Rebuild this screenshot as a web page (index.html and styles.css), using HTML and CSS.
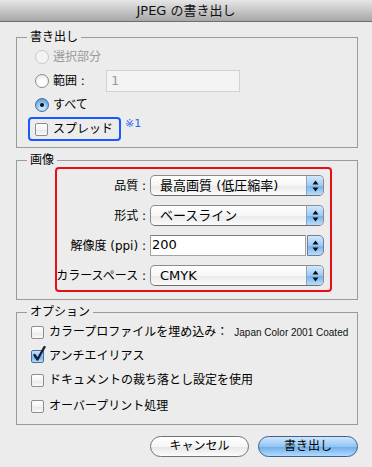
FILE: index.html
```html
<!DOCTYPE html>
<html lang="ja">
<head>
<meta charset="utf-8">
<link rel="stylesheet" href="styles.css">
</head>
<body>
<div class="window">
  <div class="titlebar">JPEG の書き出し</div>
  <div class="content">
    <fieldset class="group g-export">
      <legend>書き出し</legend>
      <div class="row"><span class="radio disabled"></span><span class="lbl dis">選択部分</span></div>
      <div class="row"><span class="radio"></span><span class="lbl range-lbl">範囲 :</span><span class="range-field">1</span></div>
      <div class="row"><span class="radio on"></span><span class="lbl">すべて</span></div>
      <div class="row spread-row">
        <div class="hl-blue"><span class="checkbox"></span><span class="lbl">スプレッド</span></div>
        <span class="note">※1</span>
      </div>
    </fieldset>

    <fieldset class="group g-image">
      <legend>画像</legend>
      <div class="hl-red">
        <span class="flabel">品質 :</span>
        <div class="popup"><span class="ptext">最高画質 (低圧縮率)</span><span class="arrows"><svg width="7" height="12" viewBox="0 0 7 12"><path d="M3.5 0.5 L6.5 4.5 L0.5 4.5 Z M0.5 7.5 L6.5 7.5 L3.5 11.5 Z" fill="#111"/></svg></span></div>
        <span class="flabel">形式 :</span>
        <div class="popup"><span class="ptext">ベースライン</span><span class="arrows"><svg width="7" height="12" viewBox="0 0 7 12"><path d="M3.5 0.5 L6.5 4.5 L0.5 4.5 Z M0.5 7.5 L6.5 7.5 L3.5 11.5 Z" fill="#111"/></svg></span></div>
        <span class="flabel">解像度 (ppi) :</span>
        <div class="combo"><span class="cfield">200</span><span class="carrows"><svg width="7" height="12" viewBox="0 0 7 12"><path d="M3.5 0.5 L6.5 4.5 L0.5 4.5 Z M0.5 7.5 L6.5 7.5 L3.5 11.5 Z" fill="#111"/></svg></span></div>
        <span class="flabel">カラースペース :</span>
        <div class="popup"><span class="ptext">CMYK</span><span class="arrows"><svg width="7" height="12" viewBox="0 0 7 12"><path d="M3.5 0.5 L6.5 4.5 L0.5 4.5 Z M0.5 7.5 L6.5 7.5 L3.5 11.5 Z" fill="#111"/></svg></span></div>
      </div>
    </fieldset>

    <fieldset class="group g-options">
      <legend>オプション</legend>
      <div class="orow"><span class="checkbox"></span><span class="lbl">カラープロファイルを埋め込み：</span><span class="small">Japan Color 2001 Coated</span></div>
      <div class="orow"><span class="checkbox checked"><svg class="tick" width="14" height="16" viewBox="0 0 14 16"><path d="M2.5 9 L5.5 13.5 L12.5 1" fill="none" stroke="#14203a" stroke-width="2.4" stroke-linecap="round" stroke-linejoin="round"/></svg></span><span class="lbl">アンチエイリアス</span></div>
      <div class="orow"><span class="checkbox"></span><span class="lbl">ドキュメントの裁ち落とし設定を使用</span></div>
      <div class="orow last"><span class="checkbox"></span><span class="lbl">オーバープリント処理</span></div>
    </fieldset>

    <div class="buttons">
      <button class="btn cancel">キャンセル</button>
      <button class="btn default">書き出し</button>
    </div>
  </div>
</div>
</body>
</html>
```

FILE: styles.css
```css
* { box-sizing: border-box; }
html, body { margin: 0; padding: 0; }
body {
  width: 372px;
  height: 467px;
  overflow: hidden;
  background: #ececec;
  font-family: "DejaVu Sans", "Noto Sans CJK JP", sans-serif;
  font-size: 12px;
  color: #000;
}
.window { width: 372px; height: 467px; background: #ececec; }
.titlebar {
  height: 22px;
  border-bottom: 1px solid #6e6e6e;
  background: linear-gradient(#e6e6e6, #c4c4c4 55%, #a7a7a7);
  text-align: center;
  font-size: 13px;
  line-height: 22px;
  color: #111;
}
.content { padding: 7px 14px 0 16px; }

.group {
  margin: 0;
  padding: 0;
  width: 342px;
  min-inline-size: 0;
  border: 1px solid #9b9b9b;
  border-radius: 0;
}
.group legend {
  margin-left: 10px;
  padding: 0 3px;
  line-height: 16px;
  font-size: 12px;
}

/* group 1 */
.g-export { padding-bottom: 6px; }
.row {
  height: 24px;
  display: flex;
  align-items: center;
  padding-left: 18px;
}
.lbl { white-space: nowrap; line-height: 16px; }
.dis { color: #9a9a9a; }
.radio {
  width: 14px;
  height: 14px;
  border-radius: 50%;
  border: 1px solid #8b8b8b;
  background: radial-gradient(circle at 50% 70%, #ffffff 30%, #e4e4e4 100%);
  margin-right: 4px;
  flex: none;
  position: relative;
}
.radio.disabled { border-color: #c9c9c9; background: #f3f3f3; }
.radio.on {
  border-color: #4a6d9c;
  background: radial-gradient(circle at 50% 75%, #c4e2fb 20%, #6aaae6 70%, #5a93cf 100%);
}
.radio.on::after {
  content: "";
  position: absolute;
  left: 4px; top: 4px;
  width: 4px; height: 4px;
  border-radius: 50%;
  background: #111;
}
.range-lbl { width: 53px; }
.range-field {
  width: 134px;
  height: 22px;
  border: 1px solid #d2d2d2;
  background: #f4f4f4;
  color: #9a9a9a;
  font-size: 13px;
  line-height: 20px;
  padding-left: 4px;
}
.spread-row { padding-left: 11px; align-items: flex-start; }
.hl-blue {
  width: 93px;
  height: 24px;
  border: 2px solid #1a57ff;
  border-radius: 4px;
  display: flex;
  align-items: center;
  padding-left: 5px;
}
.note {
  color: #2b63f5;
  font-size: 11px;
  line-height: 12px;
  margin-left: 4px;
  margin-top: 1px;
}
.checkbox {
  width: 13px;
  height: 13px;
  border: 1px solid #8e8e8e;
  border-radius: 2px;
  background: linear-gradient(#ffffff, #f3f3f3 50%, #e6e6e6 51%, #fbfbfb);
  margin-right: 5px;
  flex: none;
  position: relative;
}
.checkbox.checked {
  border-color: #4a6d9c;
  background: linear-gradient(#c9e3fb, #8cc0f0 50%, #6daee9 51%, #b6dcfb);
}
.tick { position: absolute; left: 0px; top: -5px; }

/* group 2 */
.g-image { margin-top: 4px; padding-bottom: 7px; }
.hl-red {
  margin: -1px 0 0 38px;
  width: 277px;
  border: 2px solid #e50f16;
  border-radius: 4px;
  padding: 6px 6px 4px 0;
  display: grid;
  grid-template-columns: 89px 174px;
  column-gap: 4px;
  row-gap: 9px;
  align-items: center;
}
.flabel {
  justify-self: end;
  white-space: nowrap;
  line-height: 16px;
}
.popup {
  height: 21px;
  border: 1px solid #8c8c8c;
  border-bottom-color: #6f6f6f;
  border-radius: 5px;
  background: linear-gradient(#ffffff, #f6f6f6 50%, #e9e9e9 51%, #fbfbfb);
  display: flex;
  overflow: hidden;
}
.ptext {
  flex: 1;
  padding-left: 9px;
  font-size: 13px;
  line-height: 19px;
  white-space: nowrap;
}
.arrows, .carrows {
  width: 17px;
  display: flex;
  align-items: center;
  justify-content: center;
  background: linear-gradient(#d3e8fc, #9ccbf4 50%, #72b1ec 51%, #b9ddfb);
  border-left: 1px solid #8aa4c4;
}
.combo { height: 21px; display: flex; gap: 1px; }
.cfield {
  flex: 1;
  border: 1px solid #a3a3a3;
  border-top-color: #7f7f7f;
  background: #fff;
  font-size: 13px;
  line-height: 18px;
  padding-left: 1px;
}
.carrows {
  border: 1px solid #6f7f99;
  border-radius: 0 5px 5px 0;
}

/* group 3 */
.g-options { margin-top: 4px; padding-bottom: 6px; }
.orow {
  height: 24px;
  display: flex;
  align-items: center;
  padding-left: 14px;
}
.orow.last { height: 26px; padding-top: 2px; }
.small {
  font-family: "Liberation Sans", sans-serif;
  font-size: 10px;
  margin-left: 6px;
  white-space: nowrap;
  color: #111;
}

/* buttons */
.buttons {
  margin-top: 11px;
  padding-left: 134px;
  display: flex;
  gap: 9px;
}
.btn {
  height: 21px;
  border-radius: 11px;
  font-family: "DejaVu Sans", "Noto Sans CJK JP", sans-serif;
  font-size: 12px;
  color: #000;
  padding: 0;
  line-height: 19px;
}
.cancel {
  width: 100px;
  border: 1px solid #727272;
  background: linear-gradient(#ffffff, #f6f6f6 50%, #e6e6e6 51%, #fcfcfc);
}
.default {
  width: 101px;
  border: 1px solid #3d5f94;
  background: linear-gradient(#d0e6fb, #93c6f2 50%, #6badea 51%, #b3dafb);
}
```
